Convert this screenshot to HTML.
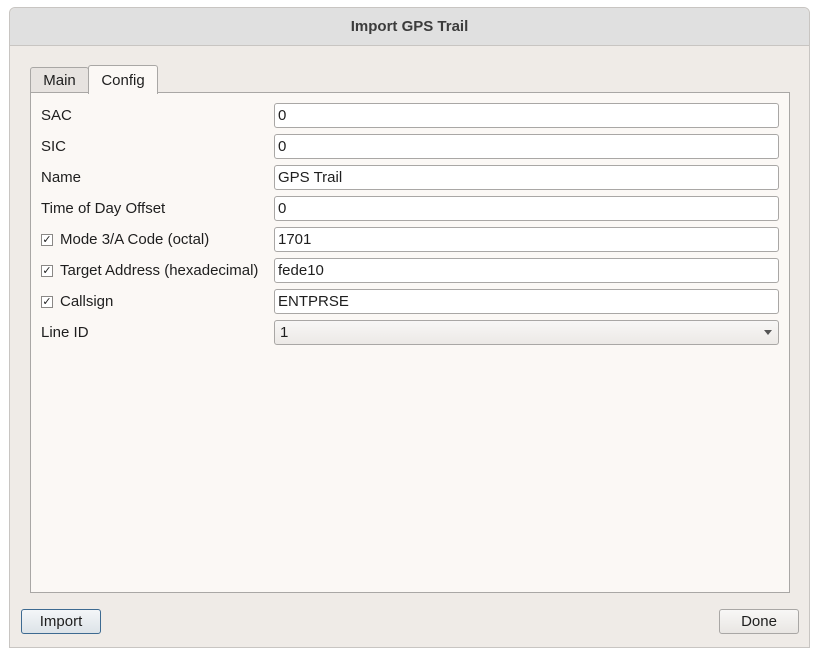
<!DOCTYPE html>
<html><head><style>
body{margin:0;width:820px;height:655px;background:#fff;font-family:"Liberation Sans","DejaVu Sans",sans-serif;font-size:15px;color:#1e1e1e;position:relative;overflow:hidden}
.win{position:absolute;left:9px;top:7px;width:801px;height:641px;background:#efebe7;border:1px solid #c8c5c2;border-radius:6px 6px 0 0;box-sizing:border-box}
.title{position:absolute;left:0;top:0;right:0;height:37px;background:#e0e0e0;border-bottom:1px solid #c8c5c2;border-radius:6px 6px 0 0;text-align:center;line-height:37px;font-weight:bold;color:#3c3c3c}
.pane{position:absolute;left:30px;top:92px;width:760px;height:501px;background:#fbf8f5;border:1px solid #a9a7a5;box-sizing:border-box}
.tab{position:absolute;border:1px solid #a9a7a5;border-bottom:none;border-radius:3px 3px 0 0;box-sizing:border-box;text-align:center}
.lbl{position:absolute;left:41px;height:24px;line-height:24px}
.f{position:absolute;left:274px;width:505px;height:25px;background:#fff;border:1px solid #a9a7a5;border-radius:3px;box-sizing:border-box;line-height:23px;padding-left:3px}
.cb{position:absolute;left:0;top:6px;width:12px;height:12px;border:1px solid #8a8886;background:#fff;box-sizing:border-box;font-size:11px;line-height:11px;text-align:center;font-weight:bold}
.cbl{padding-left:19px}
.btn{position:absolute;top:609px;width:80px;height:25px;border:1px solid #a9a7a5;border-radius:3px;box-sizing:border-box;background:linear-gradient(#f8f7f6,#e9e6e3);text-align:center;line-height:23px}
</style></head><body>
<div class="win"><div class="title">Import GPS Trail</div></div>
<div class="tab" style="left:30px;top:67px;width:59px;height:26px;background:#e7e3e0;line-height:26px">Main</div>
<div class="pane"></div>
<div class="tab" style="left:88px;top:65px;width:70px;height:29px;background:#fbf8f5;line-height:29px">Config</div>
<div class="lbl" style="top:104px">SAC</div><div class="f" style="top:103px">0</div>
<div class="lbl" style="top:135px">SIC</div><div class="f" style="top:134px">0</div>
<div class="lbl" style="top:166px">Name</div><div class="f" style="top:165px">GPS Trail</div>
<div class="lbl" style="top:197px">Time of Day Offset</div><div class="f" style="top:196px">0</div>
<div class="lbl cbl" style="top:228px"><span class="cb">✓</span>Mode 3/A Code (octal)</div><div class="f" style="top:227px">1701</div>
<div class="lbl cbl" style="top:259px"><span class="cb">✓</span>Target Address (hexadecimal)</div><div class="f" style="top:258px">fede10</div>
<div class="lbl cbl" style="top:290px"><span class="cb">✓</span>Callsign</div><div class="f" style="top:289px">ENTPRSE</div>
<div class="lbl" style="top:321px">Line ID</div><div class="f" style="top:320px;background:linear-gradient(#f8f7f6,#ece9e6);padding-left:5px">1<span style="position:absolute;right:6px;top:9px;width:0;height:0;border-left:4px solid transparent;border-right:4px solid transparent;border-top:5px solid #555"></span></div>
<div class="btn" style="left:21px;border-color:#3d6a91;background:linear-gradient(#f4f6f8,#dde3e8)">Import</div>
<div class="btn" style="left:719px">Done</div>
</body></html>
